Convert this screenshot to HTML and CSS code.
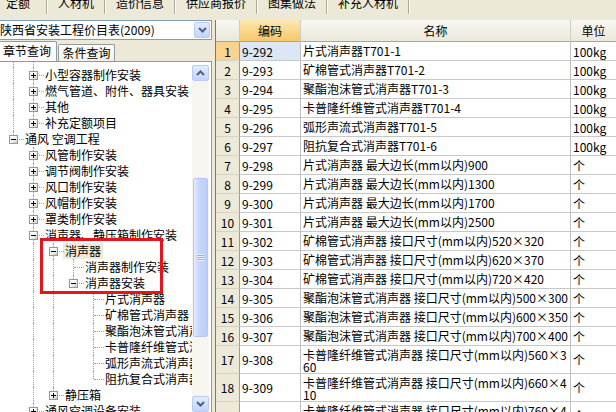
FILE: index.html
```html
<!DOCTYPE html>
<html lang="zh-CN">
<head>
<meta charset="utf-8">
<title>定额</title>
<link rel="stylesheet" href="styles.css">
</head>
<body>
<div class="app">
  <div class="toolbar">
    <span class="titem first">定额</span>
    <span class="titem">人材机</span>
    <span class="titem">造价信息</span>
    <span class="titem">供应商报价</span>
    <span class="titem">图集做法</span>
    <span class="titem">补充人材机</span>
  </div>
  <div class="main">
    <div class="left">
      <div class="combo">
        <span class="combo-text">陕西省安装工程价目表(2009)</span>
        <span class="combo-btn"><svg width="9" height="6" viewBox="0 0 9 6"><path d="M1 1l3.5 3.5L8 1" fill="none" stroke="#4d6185" stroke-width="2"/></svg></span>
      </div>
      <div class="tabs">
        <span class="tab active">章节查询</span>
        <span class="tab">条件查询</span>
      </div>
      <div class="treebox">
        <div class="tree">
          <div class="node sp"><i class="c v"></i><i class="c v"></i></div>
          <div class="node"><i class="c v"></i><i class="c t"><b class="pm plus"></b></i><span class="lbl">小型容器制作安装</span></div>
          <div class="node"><i class="c v"></i><i class="c t"><b class="pm plus"></b></i><span class="lbl">燃气管道、附件、器具安装</span></div>
          <div class="node"><i class="c v"></i><i class="c t"><b class="pm plus"></b></i><span class="lbl">其他</span></div>
          <div class="node"><i class="c v"></i><i class="c l"><b class="pm plus"></b></i><span class="lbl">补充定额项目</span></div>
          <div class="node"><i class="c l"><b class="pm"></b></i><span class="lbl">通风 空调工程</span></div>
          <div class="node"><i class="c"></i><i class="c t"><b class="pm plus"></b></i><span class="lbl">风管制作安装</span></div>
          <div class="node"><i class="c"></i><i class="c t"><b class="pm plus"></b></i><span class="lbl">调节阀制作安装</span></div>
          <div class="node"><i class="c"></i><i class="c t"><b class="pm plus"></b></i><span class="lbl">风口制作安装</span></div>
          <div class="node"><i class="c"></i><i class="c t"><b class="pm plus"></b></i><span class="lbl">风帽制作安装</span></div>
          <div class="node"><i class="c"></i><i class="c t"><b class="pm plus"></b></i><span class="lbl">罩类制作安装</span></div>
          <div class="node"><i class="c"></i><i class="c t"><b class="pm"></b></i><span class="lbl">消声器、静压箱制作安装</span></div>
          <div class="node"><i class="c"></i><i class="c v"></i><i class="c t"><b class="pm"></b></i><span class="lbl sel">消声器</span></div>
          <div class="node"><i class="c"></i><i class="c v"></i><i class="c v"></i><i class="c t"></i><span class="lbl">消声器制作安装</span></div>
          <div class="node"><i class="c"></i><i class="c v"></i><i class="c v"></i><i class="c l"><b class="pm"></b></i><span class="lbl">消声器安装</span></div>
          <div class="node"><i class="c"></i><i class="c v"></i><i class="c v"></i><i class="c"></i><i class="c t"></i><span class="lbl">片式消声器</span></div>
          <div class="node"><i class="c"></i><i class="c v"></i><i class="c v"></i><i class="c"></i><i class="c t"></i><span class="lbl">矿棉管式消声器</span></div>
          <div class="node"><i class="c"></i><i class="c v"></i><i class="c v"></i><i class="c"></i><i class="c t"></i><span class="lbl">聚酯泡沫管式消声器</span></div>
          <div class="node"><i class="c"></i><i class="c v"></i><i class="c v"></i><i class="c"></i><i class="c t"></i><span class="lbl">卡普隆纤维管式消声器</span></div>
          <div class="node"><i class="c"></i><i class="c v"></i><i class="c v"></i><i class="c"></i><i class="c t"></i><span class="lbl">弧形声流式消声器</span></div>
          <div class="node"><i class="c"></i><i class="c v"></i><i class="c v"></i><i class="c"></i><i class="c l"></i><span class="lbl">阻抗复合式消声器</span></div>
          <div class="node"><i class="c"></i><i class="c v"></i><i class="c l"><b class="pm plus"></b></i><span class="lbl">静压箱</span></div>
          <div class="node"><i class="c"></i><i class="c t"><b class="pm plus"></b></i><span class="lbl">通风空调设备安装</span></div>
        </div>
        <div class="vscroll">
          <span class="sbtn"><svg width="9" height="6" viewBox="0 0 9 6"><path d="M1 5l3.5-3.5L8 5" fill="none" stroke="#4d6185" stroke-width="2"/></svg></span>
          <span class="strack"><span class="thumb"><i class="grip"></i></span></span>
          <span class="sbtn"><svg width="9" height="6" viewBox="0 0 9 6"><path d="M1 1l3.5 3.5L8 1" fill="none" stroke="#4d6185" stroke-width="2"/></svg></span>
        </div>
      </div>
    </div>
    <div class="gridwrap">
      <div class="grid">
        <div class="row head"><div class="cell num"></div><div class="cell code hot">编码</div><div class="cell name">名称</div><div class="cell unit">单位</div></div>
        <div class="row cur"><div class="cell num">1</div><div class="cell code">9-292</div><div class="cell name">片式消声器T701-1</div><div class="cell unit">100kg</div></div>
        <div class="row"><div class="cell num">2</div><div class="cell code">9-293</div><div class="cell name">矿棉管式消声器T701-2</div><div class="cell unit">100kg</div></div>
        <div class="row"><div class="cell num">3</div><div class="cell code">9-294</div><div class="cell name">聚酯泡沫管式消声器T701-3</div><div class="cell unit">100kg</div></div>
        <div class="row"><div class="cell num">4</div><div class="cell code">9-295</div><div class="cell name">卡普隆纤维管式消声器T701-4</div><div class="cell unit">100kg</div></div>
        <div class="row"><div class="cell num">5</div><div class="cell code">9-296</div><div class="cell name">弧形声流式消声器T701-5</div><div class="cell unit">100kg</div></div>
        <div class="row"><div class="cell num">6</div><div class="cell code">9-297</div><div class="cell name">阻抗复合式消声器T701-6</div><div class="cell unit">100kg</div></div>
        <div class="row"><div class="cell num">7</div><div class="cell code">9-298</div><div class="cell name">片式消声器 最大边长(mm以内)900</div><div class="cell unit">个</div></div>
        <div class="row"><div class="cell num">8</div><div class="cell code">9-299</div><div class="cell name">片式消声器 最大边长(mm以内)1300</div><div class="cell unit">个</div></div>
        <div class="row"><div class="cell num">9</div><div class="cell code">9-300</div><div class="cell name">片式消声器 最大边长(mm以内)1700</div><div class="cell unit">个</div></div>
        <div class="row"><div class="cell num">10</div><div class="cell code">9-301</div><div class="cell name">片式消声器 最大边长(mm以内)2500</div><div class="cell unit">个</div></div>
        <div class="row"><div class="cell num">11</div><div class="cell code">9-302</div><div class="cell name">矿棉管式消声器 接口尺寸(mm以内)520×320</div><div class="cell unit">个</div></div>
        <div class="row"><div class="cell num">12</div><div class="cell code">9-303</div><div class="cell name">矿棉管式消声器 接口尺寸(mm以内)620×370</div><div class="cell unit">个</div></div>
        <div class="row"><div class="cell num">13</div><div class="cell code">9-304</div><div class="cell name">矿棉管式消声器 接口尺寸(mm以内)720×420</div><div class="cell unit">个</div></div>
        <div class="row"><div class="cell num">14</div><div class="cell code">9-305</div><div class="cell name">聚酯泡沫管式消声器 接口尺寸(mm以内)500×300</div><div class="cell unit">个</div></div>
        <div class="row"><div class="cell num">15</div><div class="cell code">9-306</div><div class="cell name">聚酯泡沫管式消声器 接口尺寸(mm以内)600×350</div><div class="cell unit">个</div></div>
        <div class="row"><div class="cell num">16</div><div class="cell code">9-307</div><div class="cell name">聚酯泡沫管式消声器 接口尺寸(mm以内)700×400</div><div class="cell unit">个</div></div>
        <div class="row"><div class="cell num">17</div><div class="cell code">9-308</div><div class="cell name">卡普隆纤维管式消声器 接口尺寸(mm以内)560×360</div><div class="cell unit">个</div></div>
        <div class="row"><div class="cell num">18</div><div class="cell code">9-309</div><div class="cell name">卡普隆纤维管式消声器 接口尺寸(mm以内)660×410</div><div class="cell unit">个</div></div>
        <div class="row"><div class="cell num">19</div><div class="cell code">9-310</div><div class="cell name">卡普隆纤维管式消声器 接口尺寸(mm以内)760×460</div><div class="cell unit">个</div></div>
      </div>
    </div>
  </div>
  <div class="mark"></div>
</div>
</body>
</html>
```
FILE: styles.css
```css
* { box-sizing: border-box; }
html, body { margin: 0; padding: 0; }
body {
  width: 616px;
  height: 412px;
  overflow: hidden;
  background: #ece9d8;
  font-family: "Noto Sans CJK SC", "Noto Sans", sans-serif;
  font-size: 12px;
  color: #000;
}
.app { position: relative; height: 412px; overflow: hidden; }

/* top toolbar (cut off at top) */
.toolbar { display: flex; height: 14px; overflow: hidden; }
.titem {
  height: 14px;
  line-height: 5px;
  padding: 0 10px;
  white-space: nowrap;
  border-right: 1px solid #aca899;
  box-shadow: 1px 0 0 #fff;
  margin-right: 1px;
}
.titem.first { padding: 0 16px 0 6px; }

.main { display: flex; margin-top: 6px; height: 392px; }
.left { width: 212px; flex: none; display: flex; flex-direction: column; }

/* combo box */
.combo {
  width: 214px;
  height: 20px;
  margin-left: -2px;
  border: 1px solid #7f9db9;
  background: #fff;
  display: flex;
  align-items: center;
}
.combo-text { flex: 1; padding-left: 1px; line-height: 18px; white-space: nowrap; }
.combo-btn, .sbtn {
  width: 16px;
  height: 16px;
  margin-right: 1px;
  border: 1px solid #b9cbf3;
  border-radius: 2px;
  background: linear-gradient(#e3ecfe, #c3d4fa);
  display: flex;
  align-items: center;
  justify-content: center;
  flex: none;
}

/* tabs */
.tabs { display: flex; align-items: flex-end; height: 21px; }
.tab {
  height: 17px;
  width: 57px;
  margin-left: 1px;
  border: 1px solid #919b9c;
  border-bottom: none;
  border-radius: 2px 2px 0 0;
  background: linear-gradient(#ffffff, #f1efe6);
  text-align: center;
  line-height: 16px;
}
.tab.active { height: 20px; width: 60px; margin-left: -3px; background: #fcfcfe; line-height: 18px; }

/* tree */
.treebox {
  flex: 1;
  display: flex;
  margin-left: -1px;
  border: 1px solid #7f9db9;
  border-bottom: none;
  background: #fff;
  min-height: 0;
}
.tree { flex: 1; overflow: hidden; }
.node { display: flex; height: 16px; padding-left: 4px; white-space: nowrap; }
.node.sp { height: 5px; }
.c { position: relative; flex: none; width: 20px; height: 100%; }
.c.v::before, .c.t::before, .c.l::before {
  content: "";
  position: absolute;
  left: 9px;
  top: 0;
  bottom: 0;
  border-left: 1px dotted #a0a0a0;
}
.c.l::before { bottom: auto; height: 8px; }
.c.t::after, .c.l::after {
  content: "";
  position: absolute;
  left: 10px;
  right: 0;
  top: 8px;
  border-top: 1px dotted #a0a0a0;
}
.pm {
  position: relative;
  z-index: 1;
  display: block;
  width: 9px;
  height: 9px;
  margin: 4px 0 0 5px;
  border: 1px solid #8d9aa6;
  background: linear-gradient(135deg, #ffffff 35%, #cfcbbd);
}
.pm::before {
  content: "";
  position: absolute;
  left: 1px;
  top: 3px;
  width: 5px;
  height: 1px;
  background: #000;
}
.pm.plus::after {
  content: "";
  position: absolute;
  left: 3px;
  top: 1px;
  width: 1px;
  height: 5px;
  background: #000;
}
.lbl { line-height: 16px; padding: 0 2px; margin-left: -1px; }
.lbl.sel { background: #ece9d8; }

/* vertical scrollbar */
.vscroll { width: 17px; flex: none; margin: 3px 2px 0 0; display: flex; flex-direction: column; }
.sbtn { width: 17px; height: 16px; margin: 0; }
.strack { flex: 1; background: #f6f5ef; }
.thumb {
  display: flex;
  align-items: center;
  justify-content: center;
  margin: 97px 1px 0 1px;
  height: 159px;
  border: 1px solid #b3c6f5;
  border-radius: 2px;
  background: linear-gradient(90deg, #e2eafe, #c6d6fc 40%, #bccffb);
}
.grip {
  display: block;
  width: 7px;
  height: 7px;
  background: repeating-linear-gradient(#eef3fe 0 1px, #8fb0f0 1px 2px);
}

/* data grid */
.gridwrap {
  flex: 1;
  margin-left: 3px;
  border-left: 1px solid #7a7a7a;
  background: #fff;
  overflow: hidden;
}
.grid {
  display: grid;
  grid-template-columns: 24px 61px 270px 1fr;
}
.row { display: contents; }
.cell {
  min-height: 19px;
  border-right: 1px solid #c0c0c0;
  border-bottom: 1px solid #c8c8c8;
  display: flex;
  align-items: center;
  padding: 0 2px;
  white-space: nowrap;
}
.cell.num {
  justify-content: center;
  background: #ece9d8;
  border-right-color: #9a9a9a;
  border-bottom-color: #d6d2c2;
  padding: 0;
}
.cell.name {
  display: block;
  white-space: normal;
  word-break: break-all;
  padding: 3px 2px 0 2px;
  line-height: 12px;
}
.cell.unit { border-right: none; }
.row.head .cell {
  min-height: 22px;
  justify-content: center;
  background: linear-gradient(#f8f7f2, #ebe8dc);
  border-bottom-color: #a9a696;
  border-right-color: #cfccbe;
}
.row.head .cell.name { display: flex; padding: 0; line-height: 16px; }
.row.head .cell.hot { background: linear-gradient(#fde7b2, #f7c86a); }
.row.cur .num { background: #fcd28e; }
.row.cur .code { background: #dce6f5; }

/* red annotation rectangle */
.mark {
  position: absolute;
  left: 40px;
  top: 238px;
  width: 123px;
  height: 56px;
  border: 3px solid #e3161d;
}
```
